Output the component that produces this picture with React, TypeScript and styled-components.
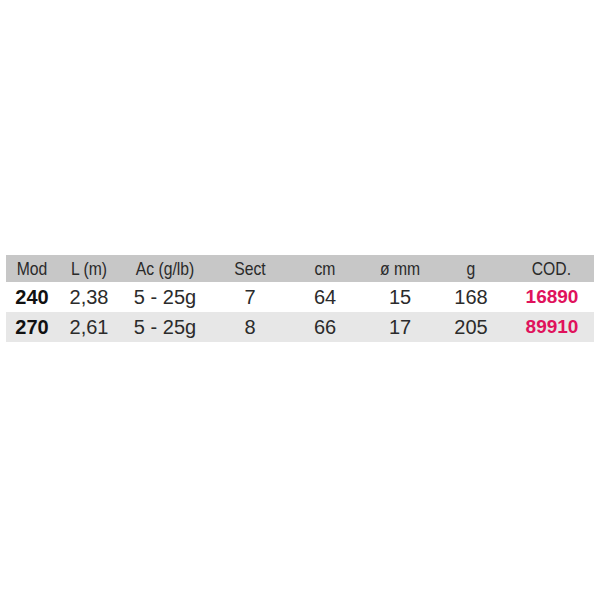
import styled, { createGlobalStyle } from "styled-components";

const GlobalStyle = createGlobalStyle`
  html, body {
    margin: 0;
    padding: 0;
    background: #ffffff;
  }
`;

const columns = "52px 62px 90px 80px 70px 80px 62px 92px";

const headers = ["Mod", "L (m)", "Ac (g/lb)", "Sect", "cm", "ø mm", "g", "COD."];

const rows = [
  { mod: "240", len: "2,38", ac: "5 - 25g", sect: "7", cm: "64", mm: "15", g: "168", code: "16890" },
  { mod: "270", len: "2,61", ac: "5 - 25g", sect: "8", cm: "66", mm: "17", g: "205", code: "89910" },
];

const App = () => {
  return (
    <Page>
      <GlobalStyle />
      <Table>
        <HeaderRow>
          {headers.map((h, i) => (
            <HeadCell key={h} last={i === headers.length - 1}>
              {h}
            </HeadCell>
          ))}
        </HeaderRow>
        {rows.map((r, i) => (
          <Row key={r.mod} shaded={i % 2 === 1}>
            <ModCell>{r.mod}</ModCell>
            <Cell>{r.len}</Cell>
            <Cell>{r.ac}</Cell>
            <Cell>{r.sect}</Cell>
            <Cell>{r.cm}</Cell>
            <Cell>{r.mm}</Cell>
            <Cell>{r.g}</Cell>
            <CodeCell>{r.code}</CodeCell>
          </Row>
        ))}
      </Table>
    </Page>
  );
};
export default App;

const Page = styled.div`
  width: 600px;
  height: 600px;
  padding: 255px 6px 0 6px;
  box-sizing: border-box;
  font-family: "Liberation Sans", Arial, sans-serif;
`;

const Table = styled.div`
  width: 588px;
  display: flex;
  flex-direction: column;
`;

const HeaderRow = styled.div`
  display: grid;
  grid-template-columns: ${columns};
  height: 27px;
  align-items: center;
  background: #c7c7c7;
`;

const HeadCell = styled.div<{ last?: boolean }>`
  text-align: center;
  padding-left: ${({ last }) => (last ? "8px" : "0")};
  font-size: 18.5px;
  color: #2a2a2a;
  transform: scaleX(0.85);
  white-space: nowrap;
`;

const Row = styled.div<{ shaded?: boolean }>`
  display: grid;
  grid-template-columns: ${columns};
  height: 30px;
  align-items: center;
  background: ${({ shaded }) => (shaded ? "#e7e7e7" : "#ffffff")};
`;

const Cell = styled.div`
  text-align: center;
  font-size: 20px;
  color: #2b2b2b;
`;

const ModCell = styled(Cell)`
  font-weight: 700;
  color: #111111;
`;

const CodeCell = styled(Cell)`
  font-weight: 700;
  color: #e0125c;
  padding-left: 8px;
  font-size: 19px;
`;
